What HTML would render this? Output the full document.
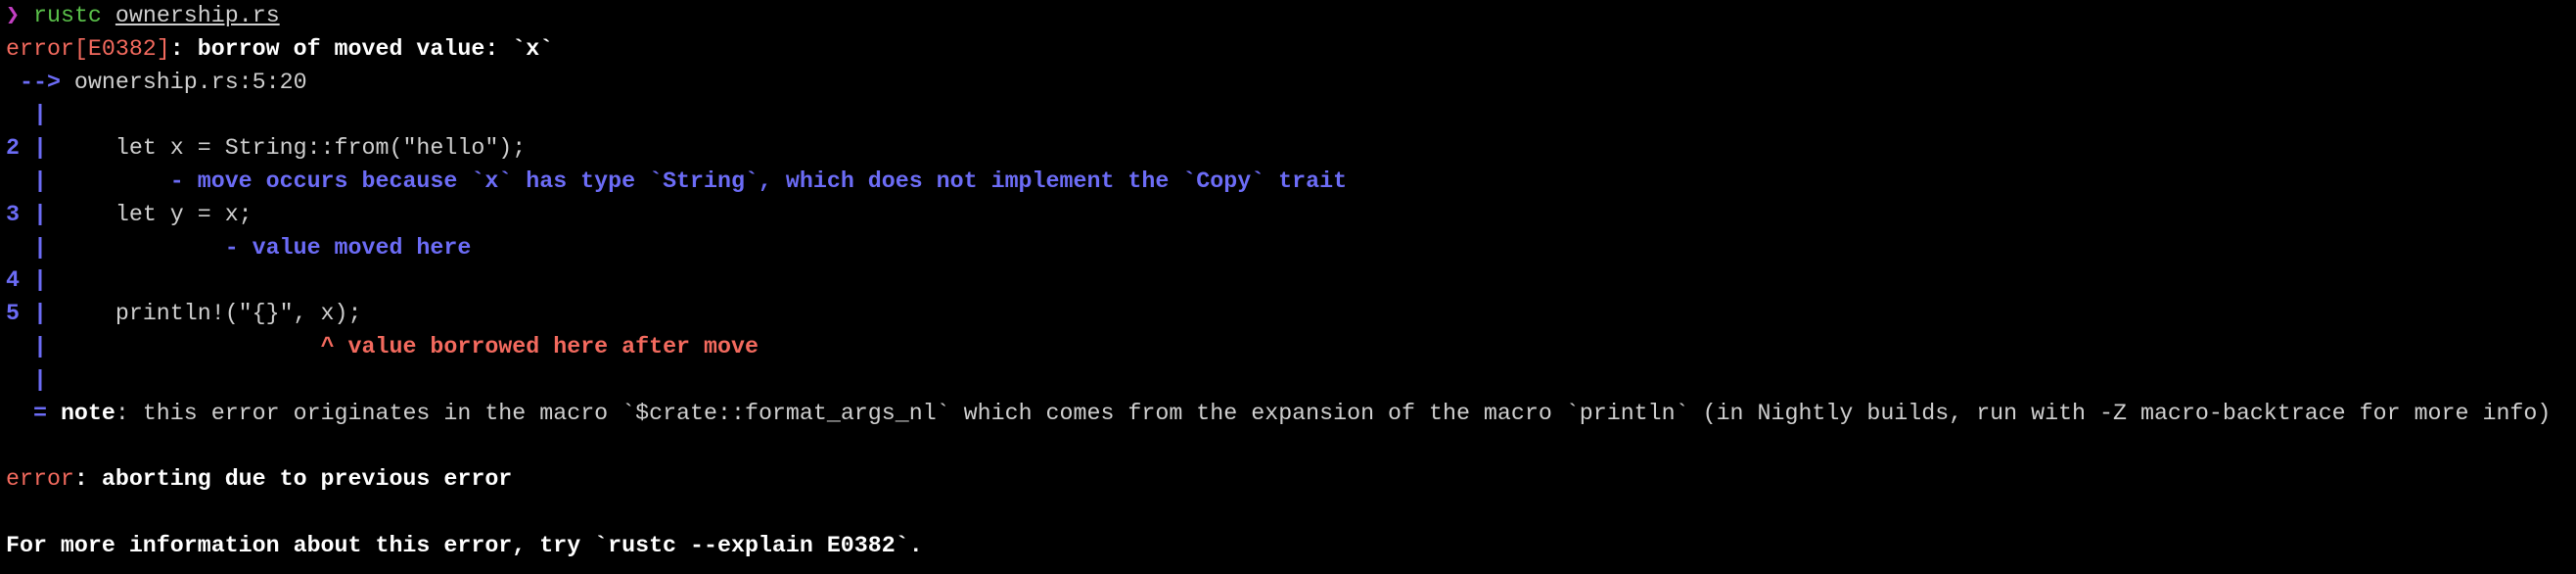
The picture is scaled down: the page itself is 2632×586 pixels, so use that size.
<!DOCTYPE html>
<html><head><meta charset="utf-8"><style>
html,body{margin:0;padding:0;background:#000;width:2632px;height:586px;overflow:hidden}
pre{margin:0;padding:0 0 0 6px;font-family:"Liberation Mono","DejaVu Sans Mono",monospace;font-size:23.3px;line-height:33.8px;color:#cfcfcf;white-space:pre}
.m{color:#c33fc3}.g{color:#5ac04a}.u{text-decoration:underline}
.r{color:#f36a5e}.w{color:#fff;font-weight:bold}.b{color:#6c6cf6;font-weight:bold}
.rb{color:#f36a5e;font-weight:bold}
</style></head><body><pre><span class="m">❯</span> <span class="g">rustc</span> <span class="u">ownership.rs</span>
<span class="r">error[E0382]</span><span class="w">: borrow of moved value: `x`</span>
 <span class="b">--></span> ownership.rs:5:20
  <span class="b">|</span>
<span class="b">2 |</span>     let x = String::from("hello");
  <span class="b">|         - move occurs because `x` has type `String`, which does not implement the `Copy` trait</span>
<span class="b">3 |</span>     let y = x;
  <span class="b">|             - value moved here</span>
<span class="b">4 |</span>
<span class="b">5 |</span>     println!("{}", x);
  <span class="b">|</span>                    <span class="rb">^ value borrowed here after move</span>
  <span class="b">|</span>
  <span class="b">=</span> <span class="w">note</span>: this error originates in the macro `$crate::format_args_nl` which comes from the expansion of the macro `println` (in Nightly builds, run with -Z macro-backtrace for more info)

<span class="r">error</span><span class="w">: aborting due to previous error</span>

<span class="w">For more information about this error, try `rustc --explain E0382`.</span></pre></body></html>
